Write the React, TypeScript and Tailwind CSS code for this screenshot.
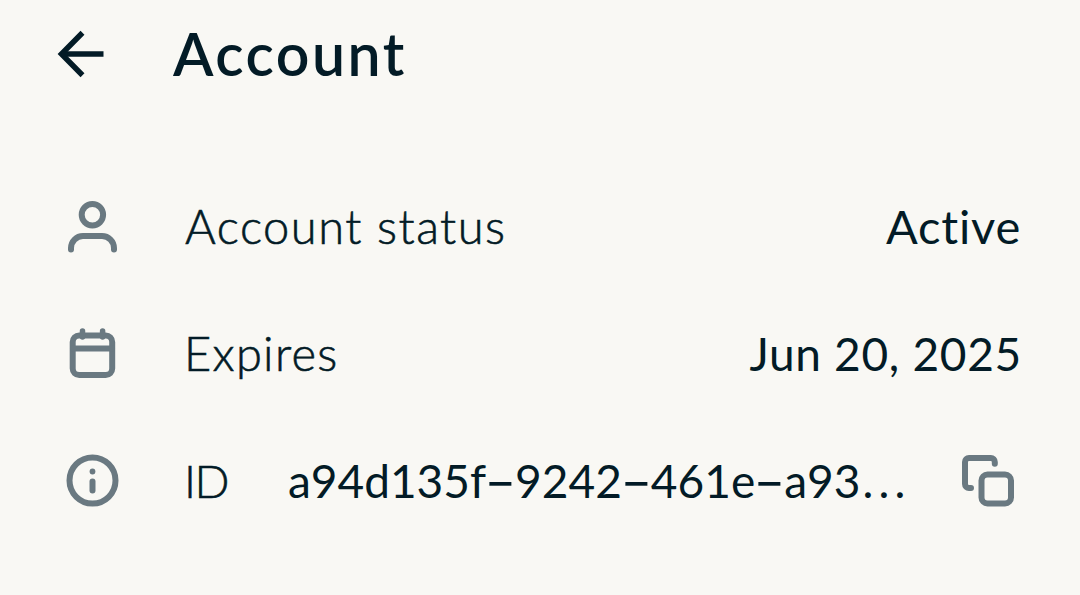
import type { ReactNode } from 'react'

function Icon({ children }: { children: ReactNode }) {
  return (
    <svg
      viewBox="0 0 60 60"
      className="size-[60px] shrink-0 text-[#6a7981]"
      fill="none"
      stroke="currentColor"
      strokeWidth={6}
      strokeLinecap="round"
      strokeLinejoin="round"
      aria-hidden="true"
    >
      {children}
    </svg>
  )
}

function BackIcon() {
  return (
    <svg
      viewBox="0 0 60 60"
      className="size-[60px]"
      fill="none"
      stroke="currentColor"
      strokeWidth={5.5}
      aria-hidden="true"
    >
      <path d="M33.5 8.8 12.5 30l21 21.2" />
      <path d="M12.5 30h42" />
    </svg>
  )
}

function UserIcon() {
  return (
    <Icon>
      <circle cx="30.4" cy="17.7" r="10.7" />
      <path d="M9 52.5V51a12 12 0 0 1 12-12h19a12 12 0 0 1 12 12v1.5" />
    </Icon>
  )
}

function CalendarIcon() {
  return (
    <Icon>
      <rect x="10.7" y="11.5" width="39.5" height="39.5" rx="6.5" />
      <path d="M11 24.5h39" />
      <path d="M20.5 7v6M40.6 7v6" strokeWidth={5.5} />
    </Icon>
  )
}

function InfoIcon() {
  return (
    <Icon>
      <circle cx="30.5" cy="29.5" r="23" />
      <circle cx="30.5" cy="20.5" r="2.9" fill="currentColor" stroke="none" />
      <path d="M30.500 30.5v9" />
    </Icon>
  )
}

function CopyIcon() {
  return (
    <Icon>
      <rect x="23.5" y="23.5" width="29.5" height="29" rx="6" />
      <path d="M36.8 12.8V11a4 4 0 0 0-4-4H11a4 4 0 0 0-4 4v22a4 4 0 0 0 4 4h2" />
    </Icon>
  )
}

interface RowProps {
  icon: ReactNode
  label: string
  labelClass: string
  children: ReactNode
}

function Row({ icon, label, labelClass, children }: RowProps) {
  return (
    <div className="flex h-[127px] items-center">
      {icon}
      <span className={`shrink-0 font-light [-webkit-text-stroke:0.6px_#031b26] ${labelClass}`}>
        {label}
      </span>
      {children}
    </div>
  )
}

const idParts = ['a94d135f', '9242', '461e', 'a93']

export default function App() {
  return (
    <main className="h-[595px] w-[1080px] overflow-hidden bg-[#f9f8f4] pl-[62px] pr-[60px] font-['Lato',sans-serif] text-[46px] leading-none text-[#031b26] [font-variant-ligatures:none]">
      <header className="-ml-[13px] flex h-[107px] items-center">
        <button type="button" aria-label="Back">
          <BackIcon />
        </button>
        <h1 className="ml-[64px] text-[59px] font-semibold tracking-[2.5px]">Account</h1>
      </header>

      <section className="pt-14">
        <Row icon={<UserIcon />} label="Account status" labelClass="ml-[63px] text-[47px] tracking-[1.5px]">
          <span className="-mr-px ml-auto text-[47px] tracking-[0.8px]">Active</span>
        </Row>
        <Row icon={<CalendarIcon />} label="Expires" labelClass="ml-[62px] text-[47px] tracking-[1.3px]">
          <span className="-mr-[2px] ml-auto tracking-[0.7px]">Jun 20, 2025</span>
        </Row>
        <Row icon={<InfoIcon />} label="ID" labelClass="ml-[62px] -tracking-[1.5px]">
          <span className="ml-[60px] whitespace-nowrap">
            {idParts.map((part, i) => (
              <span key={part}>
                {i > 0 && (
                  <span className="inline-block w-[29px] scale-x-150 text-center font-['Inter',sans-serif]">-</span>
                )}
                {part}
              </span>
            ))}
            <span className="ml-0.5 tracking-[5.2px]">...</span>
          </span>
          <button type="button" aria-label="Copy ID" className="-mr-0.5 ml-auto -translate-x-1">
            <CopyIcon />
          </button>
        </Row>
      </section>
    </main>
  )
}
